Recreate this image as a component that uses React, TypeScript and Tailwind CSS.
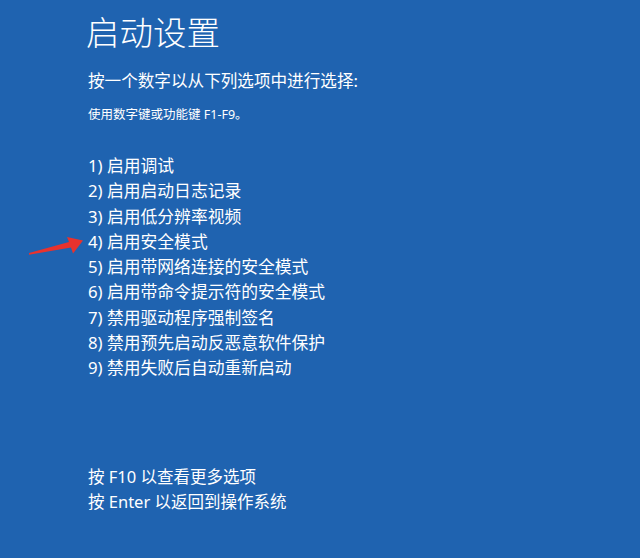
import React from "react";

const items = [
  "1) 启用调试",
  "2) 启用启动日志记录",
  "3) 启用低分辨率视频",
  "4) 启用安全模式",
  "5) 启用带网络连接的安全模式",
  "6) 启用带命令提示符的安全模式",
  "7) 禁用驱动程序强制签名",
  "8) 禁用预先启动反恶意软件保护",
  "9) 禁用失败后自动重新启动",
];

export default function App() {
  return (
    <div
      className="relative w-[640px] h-[558px] overflow-hidden bg-[#1f63b0] text-white pl-[86px] pt-[12px]"
      style={{ fontFamily: '"Noto Sans", "Noto Sans CJK SC", sans-serif' }}
    >
      <div className="text-[33.5px] leading-[40px] font-light">启动设置</div>
      <div className="mt-[17px] text-[16.6px] leading-[24px] pl-[2px]">按一个数字以从下列选项中进行选择:</div>
      <div className="mt-[14px] text-[12.5px] leading-[16px] pl-[2px]">使用数字键或功能键 F1-F9。</div>
      <div className="mt-[30px] pl-[2px] flex flex-col">
        {items.map((t) => (
          <div key={t} className="text-[16.8px] leading-[25.3px]">
            {t}
          </div>
        ))}
      </div>
      <div className="mt-[83px] pl-[2px] flex flex-col">
        <div className="text-[16.5px] leading-[25px]">按 F10 以查看更多选项</div>
        <div className="text-[16.5px] leading-[25px]">按 Enter 以返回到操作系统</div>
      </div>
      <svg
        className="absolute left-[20px] top-[225px]"
        width="70"
        height="35"
        viewBox="0 0 70 35"
      >
        <polygon points="9,28 49,17 47,12 63,15.5 53,28.5 51,22.5 9,29.8" fill="#e8322e" />
      </svg>
    </div>
  );
}
